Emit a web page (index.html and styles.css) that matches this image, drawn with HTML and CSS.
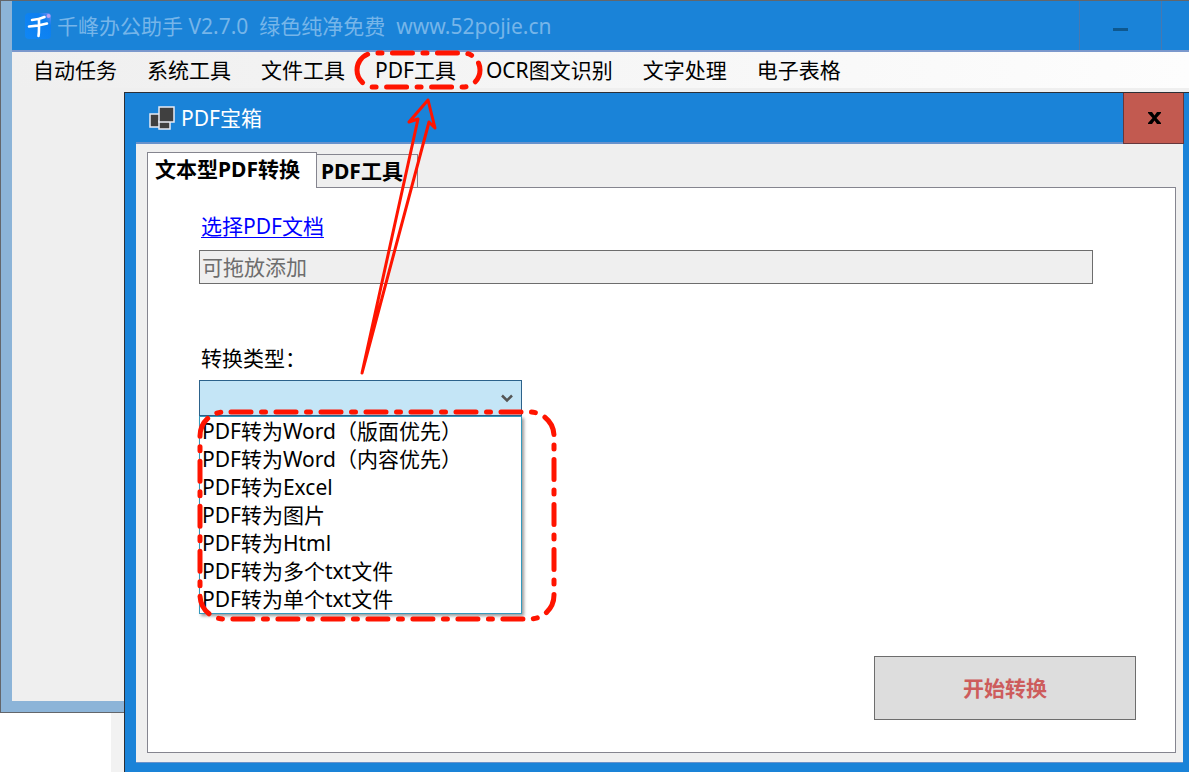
FILE: index.html
```html
<!DOCTYPE html>
<html lang="zh-CN">
<head>
<meta charset="utf-8">
<title>千峰办公助手</title>
<link rel="stylesheet" href="styles.css">
</head>
<body>
<div class="desktop">
  <section class="window window-main">
    <header class="titlebar">
      <svg class="app-logo" viewBox="0 0 26 26" aria-hidden="true">
        <defs><linearGradient id="logo" x1="0" y1="1" x2="1" y2="0"><stop offset="0" stop-color="#1087f5"/><stop offset=".75" stop-color="#0c7ff0"/><stop offset="1" stop-color="#7a8cf0"/></linearGradient></defs>
        <rect width="26" height="26" rx="4" fill="url(#logo)"/>
        <circle cx="23.500" cy="3" r="2" fill="#b9a0ef"/>
        <path d="M19.500 4Q14 6.500 7 7M4 13.500Q13 13 22 10.500M14 7V15Q14 20 13.500 23" fill="none" stroke="#fff" stroke-width="2.600" stroke-linecap="round"/>
      </svg>
      <h1 class="title title-inactive">千峰办公助手 V2.7.0&nbsp; 绿色纯净免费&nbsp; www.52pojie.cn</h1>
      <div class="controls">
        <button class="control" aria-label="最小化"><span class="minimize"></span></button>
        <button class="control control-cut" aria-label="最大化"></button>
      </div>
    </header>
    <nav class="menu">
      <button class="menu-item">自动任务</button>
      <button class="menu-item">系统工具</button>
      <button class="menu-item">文件工具</button>
      <button class="menu-item">PDF工具</button>
      <button class="menu-item">OCR图文识别</button>
      <button class="menu-item">文字处理</button>
      <button class="menu-item">电子表格</button>
    </nav>
  </section>

  <section class="window window-pdf">
    <header class="titlebar titlebar-pdf">
      <svg class="form-icon" viewBox="0 0 26 24" aria-hidden="true">
        <g fill="#404040" stroke="#e8ebf5" stroke-width="1.500">
          <rect x="1" y="8" width="10" height="13"/>
          <rect x="10" y="15" width="11" height="8"/>
          <rect x="10" y="1" width="15" height="15"/>
        </g>
      </svg>
      <h2 class="title">PDF宝箱</h2>
      <button class="close" aria-label="关闭">
        <svg class="close-icon" viewBox="0 0 13 12" aria-hidden="true"><path d="M0 0H4L6.500 3.500L9 0H13V1L8.500 6L13 11V12H9L6.500 8.500L4 12H0V11L4.500 6L0 1Z"/></svg>
      </button>
    </header>
    <main class="client">
      <div class="tabs" role="tablist">
        <button class="tab tab-active" role="tab" aria-selected="true">文本型PDF转换</button>
        <button class="tab" role="tab" aria-selected="false">PDF工具</button>
      </div>
      <div class="panel" role="tabpanel">
        <a class="pick" href="#">选择PDF文档</a>
        <input class="path" type="text" placeholder="可拖放添加" aria-label="PDF文档">
        <label class="type-label" for="type">转换类型：</label>
        <div class="combo">
          <select class="combo-box" id="type"><option></option></select>
          <svg class="chevron" viewBox="0 0 12 9" aria-hidden="true"><path d="M1 1.500L6 6.500L11 1.500" fill="none" stroke="#555" stroke-width="2.500"/></svg>
          <ul class="options" role="listbox" aria-label="转换类型">
            <li role="option">PDF转为Word（版面优先）</li>
            <li role="option">PDF转为Word（内容优先）</li>
            <li role="option">PDF转为Excel</li>
            <li role="option">PDF转为图片</li>
            <li role="option">PDF转为Html</li>
            <li role="option">PDF转为多个txt文件</li>
            <li role="option">PDF转为单个txt文件</li>
          </ul>
        </div>
        <button class="start">开始转换</button>
      </div>
    </main>
  </section>

  <svg class="marks" width="600" height="640" viewBox="0 0 600 640" aria-hidden="true">
    <g fill="none" stroke="#ff1400" stroke-width="5" stroke-linecap="round" stroke-linejoin="round">
      <path stroke-dasharray="20 10.500 4 10.500" d="M357 70A17 17 0 0 1 374 53H463A17 17 0 0 1 463 87H374A17 17 0 0 1 357 70"/>
      <path stroke-dasharray="20 10.500 4 10.500" d="M231 412H530A24 24 0 0 1 554 436V595A24 24 0 0 1 530 619H224A24 24 0 0 1 200 595V436A24 24 0 0 1 224 412H231"/>
      <path stroke-width="3" d="M428 100L409 122L418 119L362 373L429 122L435 128Z"/>
    </g>
  </svg>
</div>
</body>
</html>
```
FILE: styles.css
```css
* {
  box-sizing: border-box;
}

body {
  margin: 0;
  font: 400 21px/28px "Noto Sans", "Noto Sans CJK SC", sans-serif;
  color: #000;
}

button,
input,
select {
  font: inherit;
  color: inherit;
  border-radius: 0;
}

.desktop {
  position: relative;
  height: 100vh;
  min-height: 740px;
  overflow: hidden;
  background: linear-gradient(to right, #fff 111px, #f2f2f2 111px);
}

.window {
  position: absolute;
  display: flex;
  flex-direction: column;
}

.window-main {
  inset: 0 0 59px 0;
  padding: 0 0 11px 11px;
  border: 1px solid #63666b;
  border-right: 0;
  background: linear-gradient(#efefef, #efefef) content-box, #8cb4d8;
}

.window-pdf {
  inset: 92px 0 0 124px;
  padding: 0 6px 9px 11px;
  border: solid #2b2f36;
  border-width: 1px 0 0 1px;
  background: #1a83d8;
}

.titlebar {
  display: flex;
  align-items: center;
  height: 51px;
  flex: none;
  padding-left: 13px;
  background: #1a83d8;
  border-bottom: 2px solid #7b98cc;
}

.app-logo {
  width: 26px;
  height: 26px;
  margin-right: 6px;
}

.title {
  margin: 0;
  font-size: 21px;
  font-weight: 400;
  color: #fff;
}

.title-inactive {
  color: #76b5e9;
}

.controls {
  display: flex;
  align-self: stretch;
  margin-left: auto;
}

.control {
  width: 82px;
  padding: 8px 0 0;
  background: none;
  border: 0;
  border-left: 1px solid #4878b0;
}

.control-cut {
  width: 28px;
}

.minimize {
  display: block;
  width: 15px;
  height: 3px;
  margin: 0 auto;
  background: #0e588f;
}

.menu {
  display: flex;
  height: 36px;
  flex: none;
  padding-left: 6px;
  background: linear-gradient(to right, #efefef, #fdfdfd);
}

.menu-item {
  padding: 0 15px;
  background: none;
  border: 0;
  white-space: nowrap;
}

.titlebar-pdf {
  border-color: #6792cc;
}

.form-icon {
  width: 26px;
  height: 24px;
  margin-right: 6px;
}

.close {
  display: grid;
  place-items: center;
  width: 61px;
  height: 51px;
  margin: 0 -1px -2px auto;
  padding: 0 0 0 1px;
  background: #c25a50;
  border: 1px solid #65373c;
  border-top: 0;
}

.close-icon {
  width: 13px;
  height: 12px;
}

.client {
  display: flex;
  flex: 1;
  flex-direction: column;
  padding: 8px 7px 9px 11px;
  background: #efefef;
  border-bottom: 1px solid #6792cc;
}

.tabs {
  display: flex;
  align-items: flex-end;
}

.tab {
  height: 33px;
  padding: 0 14px 0 4px;
  font-weight: 700;
  background: #efefef;
  border: 1px solid #85858f;
  border-width: 1px 1px 0 0;
  white-space: nowrap;
}

.tab-active {
  position: relative;
  z-index: 1;
  height: 36px;
  margin-bottom: -1px;
  padding: 0 16px 4px 7px;
  background: #fff;
  border-left-width: 1px;
}

.panel {
  display: flex;
  flex: 1;
  flex-direction: column;
  align-items: flex-start;
  padding: 24px 39px 32px 51px;
  background: #fff;
  border: 1px solid #85858f;
}

.pick {
  margin-left: 2px;
  color: #00f;
  text-decoration-thickness: 1px;
  text-underline-offset: 3px;
}

.path {
  align-self: stretch;
  height: 34px;
  margin: 10px 43px 60px 0;
  padding: 0 2px;
  background: #efefef;
  border: 1px solid #6d6d6d;
}

.path::placeholder {
  color: #6d6d6d;
  opacity: 1;
}

.type-label {
  margin: 0 0 8px 2px;
}

.combo {
  position: relative;
  width: 323px;
}

.combo-box {
  display: block;
  width: 100%;
  height: 36px;
  appearance: none;
  background: #c4e5f6;
  border: 1px solid #2c628b;
}

.chevron {
  position: absolute;
  top: 14px;
  right: 9px;
  width: 12px;
  height: 9px;
}

.options {
  position: absolute;
  top: 100%;
  left: 0;
  right: 0;
  margin: 0;
  padding: 0 2px;
  list-style: none;
  background: #fff;
  border: 1px solid #3399bd;
  box-shadow: 2px 2px 3px rgba(0, 0, 0, .4);
}

.start {
  width: 262px;
  height: 64px;
  margin: auto 0 0 auto;
  font-weight: 700;
  color: #cd5c5c;
  background: #ddd;
  border: 1px solid #6d6d6d;
}

.marks {
  position: absolute;
  top: 0;
  left: 0;
  pointer-events: none;
}
```
